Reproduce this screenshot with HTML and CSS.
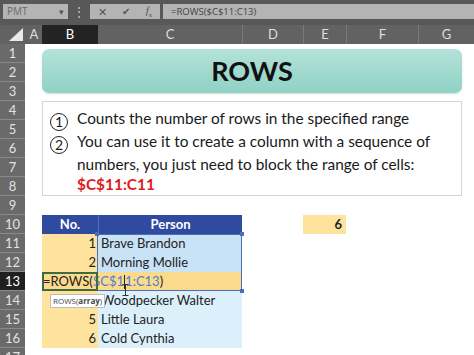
FILE: index.html
```html
<!DOCTYPE html>
<html lang="en">

<head>
  <meta charset="UTF-8" />
  <title>ROWS</title>
  <link rel="stylesheet" href="styles.css">
</head>

<body>

  <div class="toolbar">
    <div class="namebox">PMT<span class="drop">&#9662;</span></div>
    <div class="grip">&#8942;</div>
    <div class="fxbtns">
      <span class="btn">&#10005;</span>
      <span class="btn check">&#10004;</span>
      <span class="btn fx"><i>f</i><sub>x</sub></span>
    </div>
    <div class="formula">=ROWS($C$11:C13)</div>
  </div>

  <div class="sheet">
    <div class="corner"><svg width="14" height="13" viewBox="0 0 14 13"><path d="M14 0 L14 13 L0 13 Z" fill="#e9e9e9"/></svg></div>
    <div class="colhead">A</div>
    <div class="colhead active">B</div>
    <div class="colhead">C</div>
    <div class="colhead line">D</div>
    <div class="colhead line">E</div>
    <div class="colhead line">F</div>
    <div class="colhead line">G</div>

    <div class="rowhead">1</div>
    <div class="rowhead">2</div>
    <div class="rowhead">3</div>
    <div class="rowhead">4</div>
    <div class="rowhead">5</div>
    <div class="rowhead">6</div>
    <div class="rowhead">7</div>
    <div class="rowhead">8</div>
    <div class="rowhead">9</div>
    <div class="rowhead">10</div>
    <div class="rowhead">11</div>
    <div class="rowhead">12</div>
    <div class="rowhead active">13</div>
    <div class="rowhead">14</div>
    <div class="rowhead">15</div>
    <div class="rowhead">16</div>
    <div class="rowhead">17</div>

    <div class="title">ROWS</div>

    <div class="note">
      <p><span class="num">1</span>Counts the number of rows in the specified range</p>
      <p><span class="num">2</span>You can use it to create a column with a sequence of</p>
      <p>numbers, you just need to block the range of cells:</p>
      <p class="red">$C$11:C11</p>
    </div>

    <div class="result">6</div>

    <div class="table">
      <div class="th">No.</div>
      <div class="th">Person</div>

      <div class="no">1</div>
      <div class="person sel">Brave Brandon</div>
      <div class="no">2</div>
      <div class="person sel">Morning Mollie</div>
      <div class="no edit">=ROWS(<span class="ref">$C$1<span class="caret"></span>1:C13</span>)</div>
      <div class="person hot"></div>
      <div class="no">4</div>
      <div class="person">Woodpecker Walter</div>
      <div class="no">5</div>
      <div class="person">Little Laura</div>
      <div class="no">6</div>
      <div class="person">Cold Cynthia</div>

      <div class="range">
        <span class="handle tl"></span>
        <span class="handle tr"></span>
        <span class="handle br"></span>
      </div>
      <div class="tip">ROWS(<b>array</b>)</div>
      <svg class="ibeam" width="7" height="12" viewBox="0 0 7 12"><path d="M0.5 0.5 H6.5 M3.5 0.5 V11.5 M0.5 11.5 H6.5" stroke="#333" stroke-width="1" fill="none"/></svg>
    </div>
  </div>

</body>
</html>
```

FILE: styles.css
```css
body {
  margin: 0;
  width: 474px;
  height: 355px;
  overflow: hidden;
  background: #ffffff;
  font-family: Lato, "Open Sans", sans-serif;
  color: #222;
}

/* formula bar */

.toolbar {
  height: 25px;
  background: #585858;
  display: flex;
  align-items: flex-start;
  padding-top: 4px;
  box-sizing: border-box;
  font-family: "Open Sans", sans-serif;
}

.namebox {
  width: 65px;
  height: 15px;
  margin-left: 3px;
  background: #b4b4b4;
  color: #6a6a6a;
  font-size: 10px;
  line-height: 15px;
  padding-left: 4px;
  box-sizing: border-box;
  display: flex;
  justify-content: space-between;
}

.drop {
  font-size: 9px;
  color: #555;
  margin-right: 4px;
}

.grip {
  width: 22px;
  text-align: center;
  color: #c8c8c8;
  font-size: 12px;
  line-height: 15px;
}

.fxbtns {
  width: 70px;
  height: 15px;
  background: #b4b4b4;
  display: flex;
  justify-content: space-around;
  align-items: center;
  color: #555;
  font-size: 11px;
}

.check {
  font-family: "DejaVu Sans", sans-serif;
  font-size: 10px;
}

.fx {
  font-family: "Liberation Serif", serif;
  font-size: 11px;
}

.fx sub {
  font-size: 7px;
}

.formula {
  flex: 1;
  height: 15px;
  margin-left: 3px;
  background: #b4b4b4;
  color: #444;
  font-size: 9.5px;
  line-height: 15px;
  padding-left: 8px;
}

/* sheet grid */

.sheet {
  display: grid;
  grid-template-columns: 26px 16px 56px 144px 61px 43px 72px 56px;
  grid-template-rows: 19px repeat(17, 19px);
}

.corner {
  background: #626262;
  display: flex;
  align-items: flex-end;
  justify-content: flex-end;
  padding: 0 3px 3px 0;
}

.colhead {
  background: #626262;
  color: #dedede;
  font-size: 13px;
  line-height: 19px;
  text-align: center;
}

.colhead.line {
  border-left: 1px solid #7a7a7a;
}

.colhead.active {
  background: #232323;
  color: #ffffff;
}

.rowhead {
  grid-column: 1;
  background: #6a6a6a;
  color: #e2e2e2;
  font-size: 13px;
  line-height: 18px;
  text-align: center;
  border-bottom: 1px solid #8a8a8a;
  margin-right: 1px;
}

.rowhead.active {
  background: #202020;
  color: #ffffff;
}

/* title and note */

.title {
  grid-row: 2 / 5;
  grid-column: 3 / 9;
  margin: 5px 12px 8px 0;
  border-radius: 7px;
  background: linear-gradient(#b4e2da, #8fd1c4);
  box-shadow: 0 1px 2px rgba(0, 0, 0, 0.15);
  font-size: 27px;
  font-weight: bold;
  line-height: 44px;
  text-align: center;
  color: #111;
}

.note {
  grid-row: 5 / 10;
  grid-column: 3 / 9;
  margin-right: 12px;
  border: 1px solid #d4d4d4;
  padding: 6px 0 0 7px;
  font-size: 15.4px;
  line-height: 20px;
  color: #1a1a1a;
}

.note p {
  margin: 0;
  padding-left: 27px;
  white-space: nowrap;
}

.num {
  display: inline-block;
  box-sizing: border-box;
  width: 18px;
  height: 18px;
  margin-left: -27px;
  margin-right: 9px;
  border: 1.4px solid #222;
  border-radius: 50%;
  font-size: 14px;
  line-height: 15px;
  text-align: center;
  vertical-align: -3px;
}

.note .red {
  color: #e02020;
  font-weight: bold;
}

.result {
  grid-row: 11;
  grid-column: 6;
  background: #fee39c;
  font-size: 13px;
  font-weight: bold;
  text-align: right;
  padding-right: 4px;
  line-height: 19px;
}

/* table */

.table {
  grid-row: 11 / 18;
  grid-column: 3 / 5;
  display: grid;
  grid-template-columns: 56px 144px;
  grid-auto-rows: 19px;
  position: relative;
  font-size: 13px;
  line-height: 19px;
}

.th {
  background: #2f4a9f;
  color: #ffffff;
  font-weight: bold;
  text-align: center;
}

.th + .th {
  border-left: 1px solid #5670b8;
}

.no {
  background: #fee39f;
  text-align: right;
  padding-right: 2px;
}

.person {
  background: #dcf0fb;
  padding-left: 3px;
  white-space: nowrap;
}

.person.sel {
  background: #c9e3f6;
}

.person.hot,
.no.edit {
  background: #fbd98d;
}

.no.edit {
  text-align: left;
  white-space: nowrap;
  overflow: visible;
  position: relative;
  z-index: 2;
  outline: 2px solid #3f6b40;
  outline-offset: -2px;
  padding: 0 0 0 1px;
}

.ref {
  color: #4f7fc4;
}

.caret {
  display: inline-block;
  width: 0;
  height: 14px;
  border-left: 1px solid #222;
  vertical-align: -3px;
}

.range {
  position: absolute;
  left: 55px;
  top: 19px;
  width: 145px;
  height: 57px;
  border: 1px solid #4a6fb5;
  box-sizing: border-box;
  z-index: 1;
}

.handle {
  position: absolute;
  width: 4px;
  height: 4px;
  background: #4a6fb5;
}

.handle.tl {
  left: -3px;
  top: -3px;
}

.handle.tr {
  right: -3px;
  top: -3px;
}

.handle.br {
  right: -3px;
  bottom: -3px;
}

.tip {
  position: absolute;
  left: 8px;
  top: 79px;
  height: 12px;
  padding: 0 2px;
  background: #ffffff;
  border: 1px solid #bdbdbd;
  font-family: "Open Sans", sans-serif;
  font-size: 8px;
  line-height: 12px;
  color: #444;
  z-index: 3;
}

.ibeam {
  position: absolute;
  left: 80px;
  top: 69px;
  z-index: 3;
}
```
